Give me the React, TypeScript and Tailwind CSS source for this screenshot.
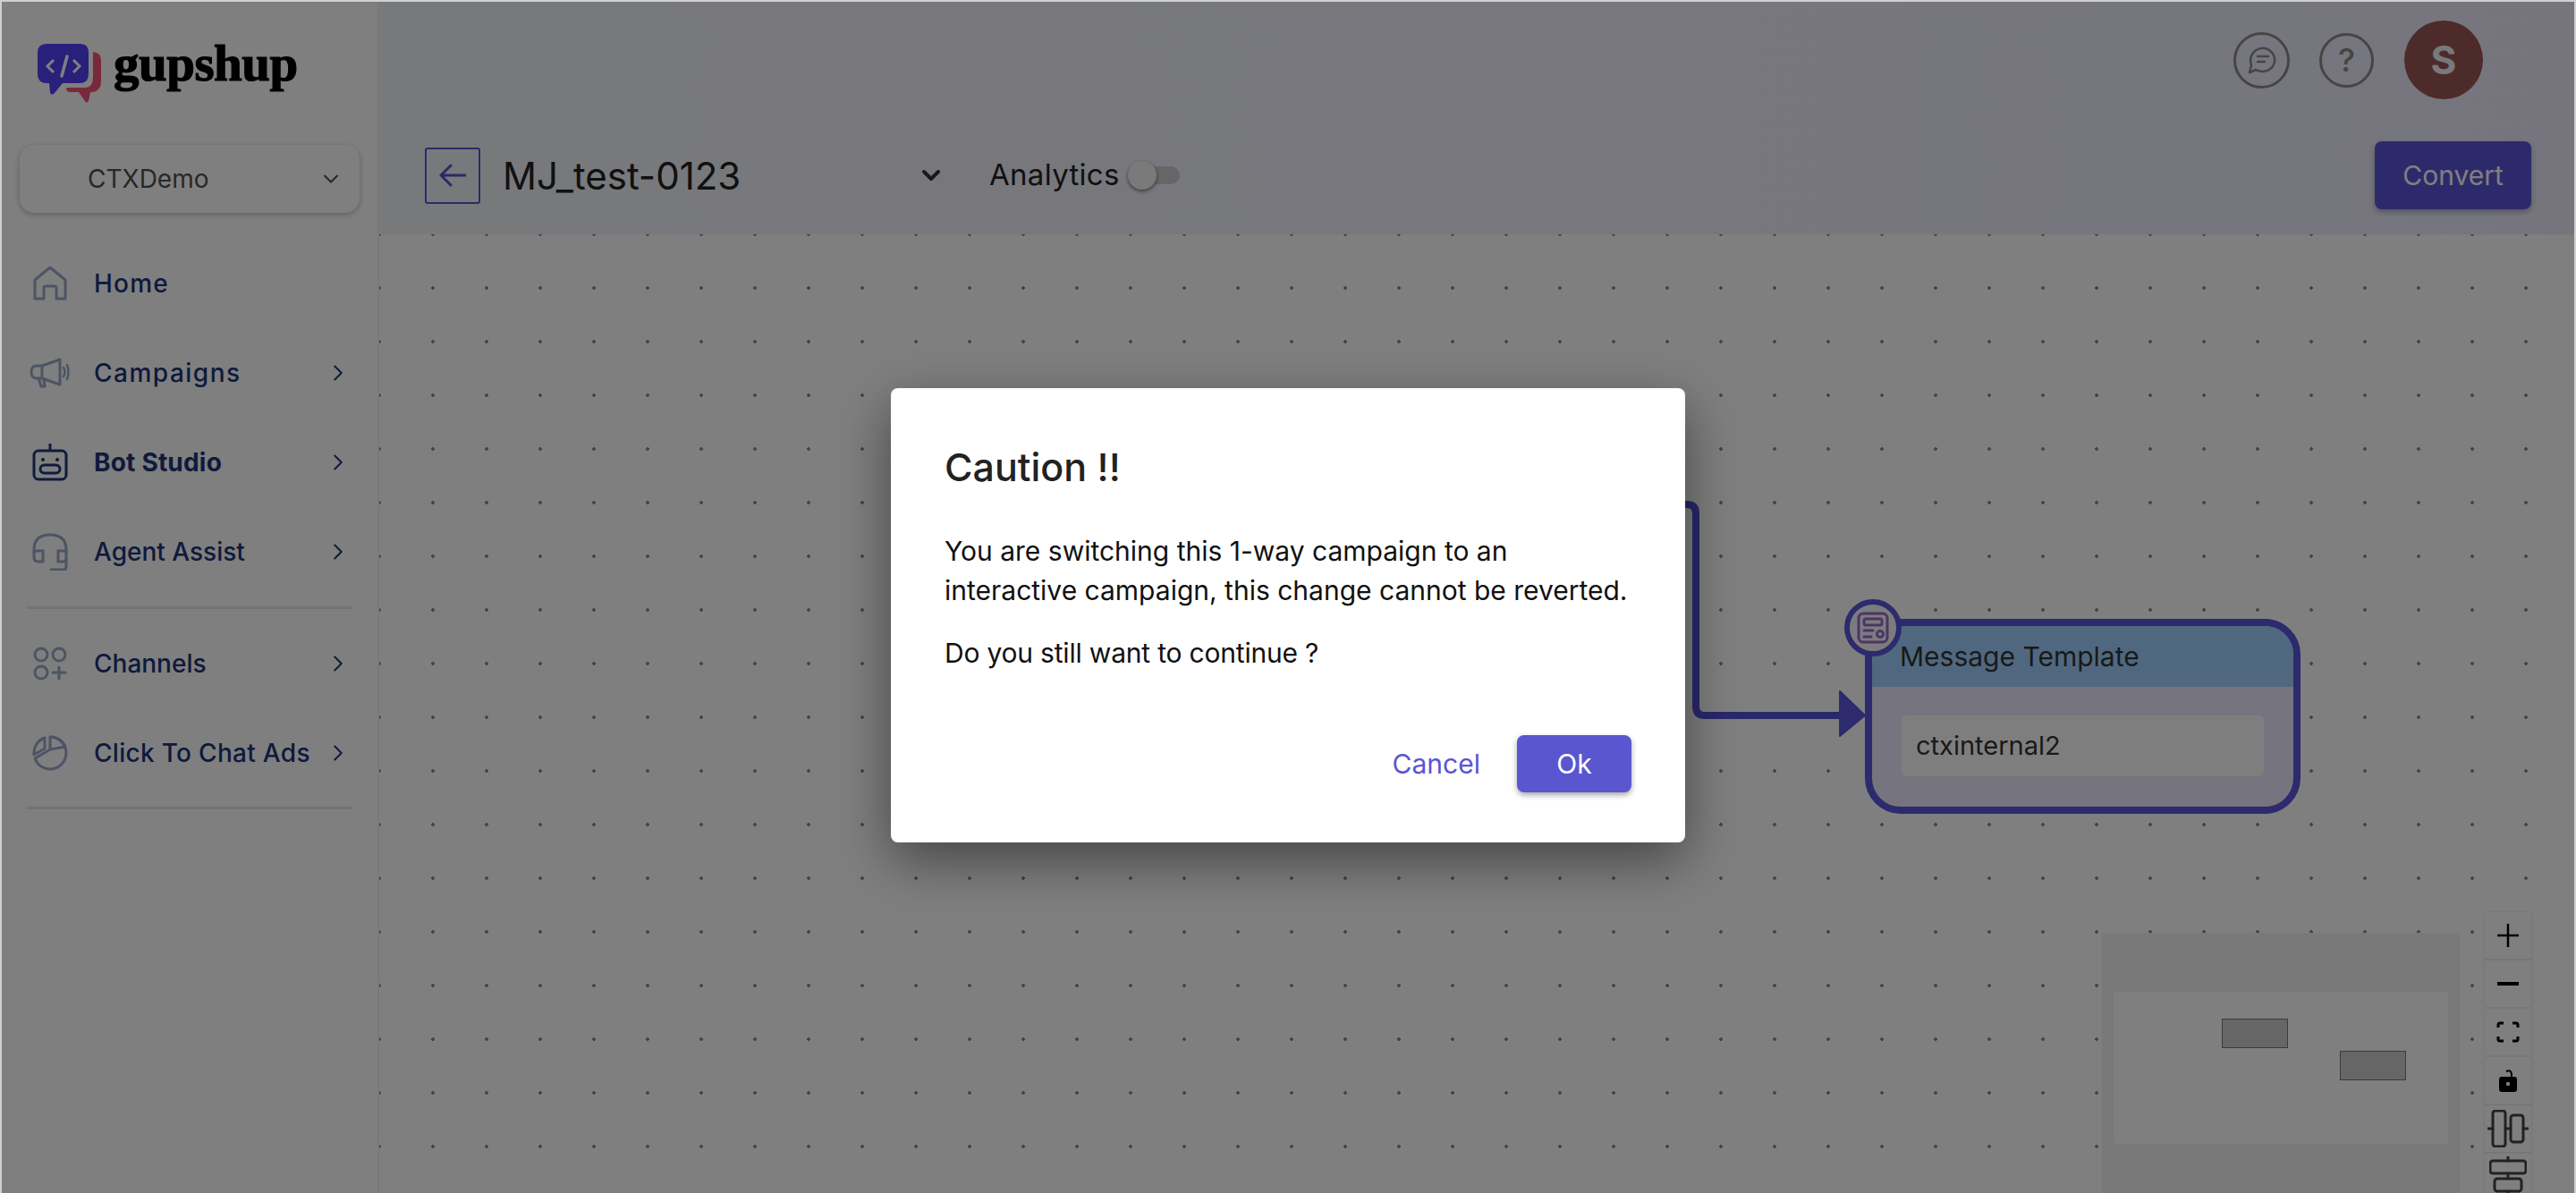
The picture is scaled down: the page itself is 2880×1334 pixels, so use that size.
import { ChevronDown, ChevronRight } from "lucide-react";
import type { ReactNode } from "react";

const FONT = "font-['Inter','Noto_Sans',sans-serif]";

function Logo() {
  return (
    <div className="flex items-start h-[66px] ml-[40px]">
      <svg width="72" height="66" viewBox="0 0 72 66" className="shrink-0">
        <path d="M32 50 Q32 49 34 49 H54 Q62 48 62 38 V9 Q71 10 71 18 V42 Q71 52 62 54 H59 L57 64 Q55 67 53 64 L46 54 H36 Q32 53 32 50 Z" fill="#f25278" />
        <path d="M10 0 H48 Q57 0 57 10 V33 Q57 44 48 44 H28 L19 55 Q16 58 14 55 L13 44 H10 Q0 44 0 33 V10 Q0 0 10 0 Z" fill="#5340f8" />
        <path d="M18 18 L11 25 L18 32 M40 18 L47 25 L40 32" fill="none" stroke="#ffffff" strokeWidth="3" />
        <path d="M33 14 L27 36" fill="none" stroke="#ffffff" strokeWidth="3.5" strokeLinecap="round" />
      </svg>
      <span className="ml-[13px] mt-[-11px] text-[57px] leading-[66px] font-bold tracking-[-0.5px] text-black font-['Liberation_Serif',serif] [-webkit-text-stroke:1.2px_black]">gupshup</span>
    </div>
  );
}

function HomeIcon() {
  return (
    <svg width="38" height="38" viewBox="0 0 38 38" fill="none" stroke="currentColor" strokeWidth="3" strokeLinejoin="round">
      <path d="M2 36 V15 L19 1 L36 15 V36 H26 V24 Q26 22 24 22 H14 Q12 22 12 24 V36 Z" />
    </svg>
  );
}

function MegaphoneIcon() {
  return (
    <svg width="46" height="34" viewBox="0 0 46 34" fill="none" stroke="currentColor" strokeWidth="3" strokeLinejoin="round" strokeLinecap="round">
      <path d="M8 9 H14 L34 2 V30 L14 23 H8 Q2 23 2 16 Q2 9 8 9 Z" />
      <path d="M10 23 L13 32 H17 L16 24 M14 9 V23" />
      <path d="M38 11 Q41 16 38 21 M42 8 Q45 16 42 24" strokeWidth="2.5" />
    </svg>
  );
}

function BotIcon() {
  return (
    <svg width="40" height="42" viewBox="0 0 40 42" fill="none" stroke="currentColor" strokeWidth="3">
      <path d="M20 0 V8" />
      <rect x="2" y="8" width="36" height="32" rx="5" />
      <circle cx="12" cy="18" r="2" fill="currentColor" stroke="none" />
      <circle cx="28" cy="18" r="2" fill="currentColor" stroke="none" />
      <rect x="9" y="24" width="22" height="9" rx="4.5" />
    </svg>
  );
}

function HeadsetIcon() {
  return (
    <svg width="40" height="42" viewBox="0 0 40 42" fill="none" stroke="currentColor" strokeWidth="3" strokeLinecap="round">
      <path d="M2 22 V19 Q2 2 20 2 Q38 2 38 19 V38 Q38 41 35 41 H21" />
      <path d="M2 22 Q2 20 5 20 H12 V32 H7 Q2 32 2 27 Z" />
      <path d="M38 22 Q38 20 35 20 H29 V32 H34 Q38 32 38 28" />
    </svg>
  );
}

function ChannelsIcon() {
  return (
    <svg width="38" height="38" viewBox="0 0 38 38" fill="none" stroke="currentColor" strokeWidth="3" strokeLinecap="round">
      <circle cx="9" cy="9" r="7" />
      <circle cx="29" cy="9" r="7" />
      <circle cx="9" cy="29" r="7" />
      <path d="M29 23 V36 M22 29 H36" />
    </svg>
  );
}

function PieIcon() {
  return (
    <svg width="40" height="40" viewBox="0 0 40 40" fill="none" stroke="currentColor" strokeWidth="3" strokeLinejoin="round">
      <path d="M20 2 A18 18 0 1 1 3 26 L20 16 Z" />
      <path d="M20 2 A18 18 0 0 1 37 13 L20 16" />
      <path d="M14 3 A18 18 0 0 0 2 22 L14 15 Z" />
    </svg>
  );
}

const NAV_TOP = [
  { label: "Home", icon: <HomeIcon />, arrow: false, active: false, track: "tracking-[1.2px]" },
  { label: "Campaigns", icon: <MegaphoneIcon />, arrow: true, active: false, track: "tracking-[1.5px]" },
  { label: "Bot Studio", icon: <BotIcon />, arrow: true, active: true, track: "tracking-[0.2px]" },
  { label: "Agent Assist", icon: <HeadsetIcon />, arrow: true, active: false, track: "tracking-[0px]" },
];

const NAV_BOTTOM = [
  { label: "Channels", icon: <ChannelsIcon />, arrow: true, active: false, track: "tracking-[0px]" },
  { label: "Click To Chat Ads", icon: <PieIcon />, arrow: true, active: false, track: "tracking-[0.3px]" },
];

function NavRow({ label, icon, arrow, active, track }: { label: string; icon: ReactNode; arrow: boolean; active: boolean; track: string }) {
  return (
    <div className="flex items-center h-[100px] pl-[28px] pr-[29px]">
      <span className={`w-[52px] flex justify-center shrink-0 ${active ? "text-[#1c3878]" : "text-[#9aa8c8]"}`}>{icon}</span>
      <span className={`ml-[23px] flex-1 text-[#1d3578] text-[28px] whitespace-nowrap ${track} ${active ? "font-bold" : "font-medium"}`}>{label}</span>
      {arrow && <ChevronRight className="text-[#1d3578] w-[30px] h-[30px]" strokeWidth={1.6} />}
    </div>
  );
}

function Sidebar() {
  return (
    <aside className="w-[422px] shrink-0 bg-white border-r-2 border-[#f2f2f2] flex flex-col pt-[47px]">
      <Logo />
      <div className="mx-[20px] mt-[47px] h-[76px] rounded-[16px] bg-white shadow-[0_2px_6px_rgba(60,60,110,0.35)] flex items-center pl-[76px] pr-[18px]">
        <span className="flex-1 text-[28px] text-[#505050]">CTXDemo</span>
        <ChevronDown className="w-[28px] h-[28px] text-[#3e4a60]" strokeWidth={1.7} />
      </div>
      <nav className="mt-[29px]">
        {NAV_TOP.map((n) => (
          <NavRow key={n.label} {...n} />
        ))}
        <div className="mx-[28px] my-[11px] h-[3px] bg-[#e6e7ec]" />
        {NAV_BOTTOM.map((n) => (
          <NavRow key={n.label} {...n} />
        ))}
        <div className="mx-[28px] my-[10px] h-[3px] bg-[#e6e7ec]" />
      </nav>
    </aside>
  );
}

function Header() {
  return (
    <header className="h-[260px] shrink-0 bg-gradient-to-r from-[#f1f3f7] to-[#ecebfd] flex flex-col">
      <div className="h-[130px] flex items-center justify-end pr-[102px] shrink-0">
        <div className="w-[63px] h-[63px] rounded-full border-[3px] border-[#8b8b8b] flex items-center justify-center text-[#8b8b8b]">
          <svg width="32" height="32" viewBox="0 0 32 32" fill="none" stroke="currentColor" strokeWidth="2.5" strokeLinejoin="round" strokeLinecap="round">
            <path d="M2 30 L4 22 Q1 12 8 6 Q16 0 24 5 Q31 10 30 18 Q28 28 17 29 Q12 29 9 27 Z" />
            <path d="M11 12 H23 M11 18 H19" />
          </svg>
        </div>
        <div className="ml-[33px] w-[61px] h-[61px] rounded-full border-[3px] border-[#8b8b8b] flex items-center justify-center text-[36px] leading-none font-medium text-[#8b8b8b]">?</div>
        <div className="ml-[34px] w-[88px] h-[88px] rounded-full bg-[#9a5655] flex items-center justify-center text-[44px] font-bold text-[#f2f2f2]">S</div>
      </div>
      <div className="flex items-center h-[76px] mt-[26px] pl-[51px] pr-[48px]">
        <button className="w-[62px] h-[63px] border-2 border-[#5a54cf] rounded-[3px] flex items-center justify-center text-[#5a54cf]">
          <svg width="30" height="26" viewBox="0 0 30 26" fill="none" stroke="currentColor" strokeWidth="3" strokeLinecap="round" strokeLinejoin="round">
            <path d="M29 13 H2 M13 2 L2 13 L13 24" />
          </svg>
        </button>
        <div className="w-[463px] ml-[25px] text-[42px] text-[#222] font-normal whitespace-nowrap">MJ_test-0123</div>
        <ChevronDown className="w-[32px] h-[32px] text-[#333]" strokeWidth={3} />
        <span className="ml-[49px] text-[33px] tracking-[0.3px] text-[#222] whitespace-nowrap">Analytics</span>
        <div className="relative ml-[12px] w-[55px] h-[20px] rounded-full bg-[#cccccc]">
          <span className="absolute -left-[3px] -top-[6px] w-[32px] h-[32px] rounded-full bg-[#f5f5f5] shadow-[0_2px_4px_rgba(0,0,0,0.5)]" />
        </div>
        <div className="flex-1" />
        <button className="w-[175px] h-[76px] rounded-[8px] bg-[#5a54d6] text-[#ffffff] text-[30px] shadow-[0_3px_6px_rgba(0,0,0,0.3)]">Convert</button>
      </div>
    </header>
  );
}

function FlowNode() {
  return (
    <>
      {/* connector coming out from under the dialog */}
      <svg className="absolute left-[1400px] top-[295px]" width="262" height="270" viewBox="0 0 262 270" fill="none">
        <path d="M0 7 H62 Q72 7 72 17 V233 Q72 243 82 243 H235" stroke="#5250d4" strokeWidth="8" />
        <path d="M233 216 L261 243 L233 266 Z" fill="#5a54dc" stroke="#5a54dc" strokeWidth="2" strokeLinejoin="round" />
      </svg>
      <div className="absolute left-[1661px] top-[430px] w-[487px] h-[218px] rounded-[40px] border-[8px] border-[#5a54dc] bg-[#ece8ff] overflow-hidden">
        <div className="h-[68px] bg-[#a1d0fe] pl-[31px] flex items-center text-[30px] text-[#333]">Message Template</div>
        <div className="mx-[33px] mt-[32px] h-[68px] rounded-[6px] bg-[#fcfcfc] pl-[16px] flex items-center text-[29px] text-[#333]">ctxinternal2</div>
      </div>
      <div className="absolute left-[1638px] top-[408px] w-[64px] h-[64px] rounded-full border-[6px] border-[#5a54dc] bg-[#f8f8ff] flex items-center justify-center">
        <svg width="36" height="36" viewBox="0 0 36 36" fill="none" stroke="#9a6ac8" strokeWidth="3" strokeLinecap="round">
          <rect x="2" y="2" width="32" height="32" rx="5" />
          <rect x="8" y="8" width="20" height="7" rx="2" />
          <path d="M8 21 H18 M8 28 H16" />
          <circle cx="26" cy="25" r="3.5" />
        </svg>
      </div>
    </>
  );
}

function MiniMap() {
  return (
    <div className="absolute left-[1926px] top-[781px] w-[400px] h-[300px] bg-[#f2f2f2] pt-[66px] pl-[13px]">
      <div className="relative w-[374px] h-[170px] bg-white">
        <div className="absolute left-[121px] top-[30px] w-[74px] h-[33px] bg-[#cccccc] border border-[#777]" />
        <div className="absolute left-[253px] top-[66px] w-[74px] h-[33px] bg-[#cccccc] border border-[#777]" />
      </div>
    </div>
  );
}

function ControlBtn({ children }: { children: ReactNode }) {
  return (
    <button className="w-[52px] h-[54px] shrink-0 bg-[#fefefe] border-b-2 border-[#eeeeee] flex items-center justify-center text-black">
      {children}
    </button>
  );
}

function Controls() {
  return (
    <div className="absolute left-[2354px] top-[758px] w-[52px] flex flex-col shadow-[0_0_4px_rgba(0,0,0,0.12)]">
      <ControlBtn>
        <svg width="26" height="26" viewBox="0 0 26 26" stroke="currentColor" strokeWidth="2.5"><path d="M13 0 V26 M1 13 H25" /></svg>
      </ControlBtn>
      <ControlBtn>
        <svg width="26" height="6" viewBox="0 0 26 6" stroke="currentColor" strokeWidth="4"><path d="M1 3 H25" /></svg>
      </ControlBtn>
      <ControlBtn>
        <svg width="26" height="24" viewBox="0 0 26 24" fill="none" stroke="currentColor" strokeWidth="3"><path d="M8 2 H4 Q2 2 2 4 V7 M18 2 H22 Q24 2 24 4 V7 M8 22 H4 Q2 22 2 20 V17 M18 22 H22 Q24 22 24 20 V17" /></svg>
      </ControlBtn>
      <ControlBtn>
        <svg width="20" height="26" viewBox="0 0 20 26" fill="none"><path d="M8 3 Q14 0 14 8 V10" stroke="currentColor" strokeWidth="2" /><rect x="0" y="9" width="20" height="17" rx="3" fill="currentColor" /><circle cx="10" cy="17" r="2.2" fill="#fff" /></svg>
      </ControlBtn>
      <ControlBtn>
        <svg width="46" height="42" viewBox="0 0 46 42" fill="none" stroke="#444" strokeWidth="3" strokeLinecap="round"><rect x="6" y="1" width="14" height="40" rx="3" /><rect x="26" y="6" width="14" height="30" rx="3" /><path d="M1 21 H6 M20 21 H26 M40 21 H45" /></svg>
      </ControlBtn>
      <ControlBtn>
        <svg width="42" height="46" viewBox="0 0 42 46" fill="none" stroke="#444" strokeWidth="3" strokeLinecap="round"><rect x="1" y="5" width="40" height="14" rx="3" /><rect x="6" y="25" width="30" height="14" rx="3" /><path d="M21 0 V5 M21 19 V25 M21 39 V46" /></svg>
      </ControlBtn>
    </div>
  );
}

function Dialog() {
  return (
    <div className="absolute left-[994px] top-[432px] w-[888px] h-[508px] rounded-[8px] bg-white shadow-[0_20px_60px_rgba(0,0,0,0.45)] pt-[60px] px-[60px]">
      <h2 className="text-[43px] leading-[56px] font-medium text-[#222]">Caution !!</h2>
      <p className="mt-[44px] text-[30px] leading-[44px] text-[#111]">
        You are switching this 1-way campaign to an
        <br />
        interactive campaign, this change cannot be reverted.
      </p>
      <p className="mt-[26px] text-[30px] tracking-[-0.2px] leading-[44px] text-[#111]">Do you still want to continue ?</p>
      <div className="mt-[70px] flex items-center justify-end">
        <button className="text-[30px] text-[#5a54d6]">Cancel</button>
        <button className="ml-[41px] w-[128px] h-[64px] rounded-[8px] bg-[#5a56cf] text-white text-[30px] shadow-[0_3px_6px_rgba(0,0,0,0.35)]">Ok</button>
      </div>
    </div>
  );
}

export default function App() {
  return (
    <div className={`relative w-[2880px] h-[1334px] overflow-hidden bg-[#d0d0d0] pt-[2px] px-[2px] ${FONT}`}>
      <div className="relative flex h-full w-full overflow-hidden">
        <Sidebar />
        <main className="flex-1 flex flex-col min-w-0">
          <Header />
          <div className="relative flex-1 bg-white bg-[radial-gradient(circle,#8c8c8c_1.8px,transparent_2px)] bg-[size:60px_60px] bg-[position:-30px_-30px]">
            <FlowNode />
            <MiniMap />
            <Controls />
          </div>
        </main>
        {/* modal backdrop */}
        <div className="absolute inset-0 bg-black/50" />
        <Dialog />
      </div>
    </div>
  );
}
